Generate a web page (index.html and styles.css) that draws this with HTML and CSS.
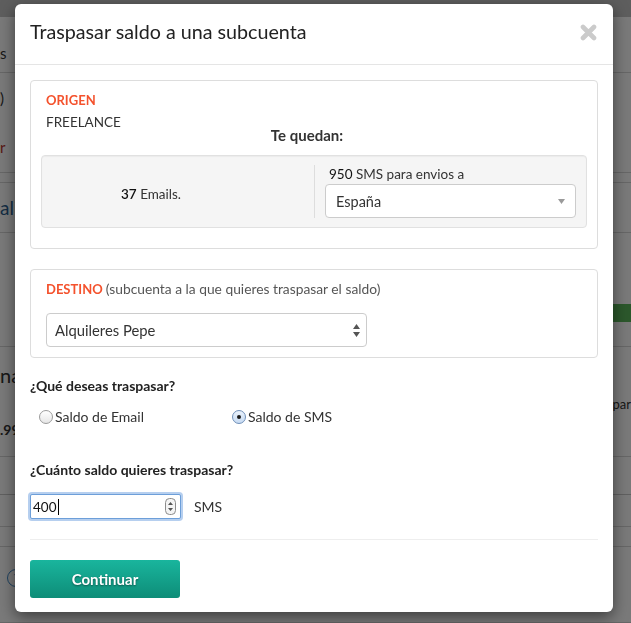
FILE: index.html
```html
<!DOCTYPE html>
<html lang="es">
<head>
<meta charset="utf-8">
<title>Traspasar saldo a una subcuenta</title>
<link rel="stylesheet" href="styles.css">
</head>
<body>
<div class="page">
  <div class="page-top"></div>
  <div class="page-row row-a"><span class="frag">s</span></div>
  <div class="page-row row-b">
    <span class="frag">)</span>
    <span class="frag red">r</span>
  </div>
  <div class="page-row row-c"></div>
  <div class="page-row row-d"><span class="frag blue">aliz</span></div>
  <div class="page-row row-e"><div class="green-bar"></div></div>
  <div class="page-row row-f">
    <span class="frag big">na</span>
    <span class="frag right">par</span>
    <span class="frag bold">.99</span>
  </div>
  <div class="page-row row-g"></div>
  <div class="page-row row-h"></div>
  <div class="page-row row-j"></div>
  <div class="page-row row-i"><span class="help-circle">?</span></div>
</div>

<div class="backdrop"></div>

<div class="modal">
  <div class="modal-header">
    <h4 class="modal-title">Traspasar saldo a una subcuenta</h4>
    <svg class="close-icon" width="17" height="17" viewBox="0 0 17 17" aria-label="Cerrar">
      <path d="M3 3 L14 14 M14 3 L3 14" stroke="#cbcbcb" stroke-width="4.6" stroke-linecap="round"/>
    </svg>
  </div>

  <div class="modal-body">
    <div class="panel">
      <div class="panel-label">ORIGEN</div>
      <div class="account-name">FREELANCE</div>
      <div class="remaining">Te quedan:</div>
      <div class="well">
        <div class="well-col emails"><span><b class="num">37</b> Emails.</span></div>
        <div class="well-col sms">
          <div class="sms-label"><span class="num">950</span> SMS para envios a</div>
          <div class="select">
            <span>España</span>
            <svg width="7" height="5" viewBox="0 0 7 5"><path d="M0 0 H7 L3.5 5 Z" fill="#9a9a9a"/></svg>
          </div>
        </div>
      </div>
    </div>

    <div class="panel panel-dest">
      <div class="panel-label">DESTINO <span class="hint">(subcuenta a la que quieres traspasar el saldo)</span></div>
      <div class="select select-dest">
        <span>Alquileres Pepe</span>
        <svg width="7" height="13" viewBox="0 0 7 13"><path d="M0 5 H7 L3.5 0 Z M0 8 H7 L3.5 13 Z" fill="#555"/></svg>
      </div>
    </div>

    <div class="question q1">¿Qué deseas traspasar?</div>
    <div class="radios">
      <label class="radio"><span class="radio-dot"></span>Saldo de Email</label>
      <label class="radio"><span class="radio-dot checked"></span>Saldo de SMS</label>
    </div>

    <div class="question q2">¿Cuánto saldo quieres traspasar?</div>
    <div class="amount-row">
      <div class="amount-input">
        <span class="amount-value">400</span><span class="caret"></span>
        <svg class="spinner" width="11" height="17" viewBox="0 0 11 17">
          <rect x="0.5" y="0.5" width="10" height="16" rx="4" fill="#f4f4f4" stroke="#8c8c8c"/>
          <path d="M3 7 H8 L5.5 4 Z M3 10 H8 L5.5 13 Z" fill="#555"/>
        </svg>
      </div>
      <span class="unit">SMS</span>
    </div>

    <hr class="divider">

    <button class="btn-continue" type="button">Continuar</button>
  </div>
</div>
</body>
</html>
```

FILE: styles.css
```css
* { box-sizing: border-box; }

html, body {
  margin: 0;
  padding: 0;
}

body {
  width: 631px;
  height: 623px;
  overflow: hidden;
  position: relative;
  font-family: Lato, "Open Sans", "Liberation Sans", sans-serif;
  font-size: 13.5px;
  color: #333;
  background: #fff;
}

/* ---------- background page ---------- */
.page {
  display: flex;
  flex-direction: column;
}

.page-top {
  height: 17px;
  background: #c4c4c4;
}

.page-row {
  position: relative;
  display: flex;
  flex-direction: column;
  justify-content: center;
  border-bottom: 1px solid #d8d8d8;
}

.row-a { height: 56px; justify-content: flex-end; padding-bottom: 10px; }
.row-b { height: 100px; justify-content: space-around; }
.row-c { height: 10px; }
.row-d { height: 50px; }
.row-e { height: 114px; justify-content: flex-start; padding-top: 71px; }
.row-f { height: 110px; justify-content: flex-start; padding-top: 19px; }
.row-g { height: 38px; border-bottom-color: #c8c8c8; }
.row-h { height: 32px; }
.row-j { height: 20px; }
.row-i { height: 76px; padding-left: 7px; padding-bottom: 14px; }

.frag {
  line-height: 18px;
  font-size: 15px;
  color: #333;
}
.frag.red { color: #b8342a; }
.frag.blue { color: #2c5f8f; font-size: 19px; }
.frag.big { font-size: 20px; }
.frag.right { align-self: flex-end; font-size: 13px; margin-top: 11px; margin-right: 0; }
.frag.bold { font-weight: 700; font-size: 14px; margin-top: 8px; }

.green-bar {
  align-self: flex-end;
  width: 40px;
  height: 18px;
  background: #5cb85c;
}

.help-circle {
  width: 18px;
  height: 18px;
  border: 1px solid #428bca;
  border-radius: 50%;
  color: #428bca;
  font-size: 12px;
  display: flex;
  align-items: center;
  justify-content: center;
}

/* ---------- overlay ---------- */
.backdrop {
  position: fixed;
  inset: 0;
  background: rgba(0, 0, 0, 0.52);
}

.modal {
  position: absolute;
  left: 15px;
  top: 4px;
  width: 598px;
  height: 608px;
  background: #fff;
  border-radius: 6px;
  box-shadow: 0 5px 15px rgba(0, 0, 0, 0.5);
  display: flex;
  flex-direction: column;
}

.modal-header {
  display: flex;
  align-items: center;
  justify-content: space-between;
  padding: 15px 16px 19px 15px;
  border-bottom: 1px solid #e5e5e5;
}

.modal-title {
  margin: 0;
  font-size: 19.7px;
  line-height: 26px;
  font-weight: 400;
  color: #222;
}

.close-icon { display: block; margin-top: 0; }

.modal-body {
  padding: 15px 15px 0;
}

/* ---------- panels ---------- */
.panel {
  border: 1px solid #dddddd;
  border-radius: 4px;
  padding: 10px 10px 20px;
}

.panel-dest {
  margin-top: 20px;
  padding: 10px 10px 10px 15px;
}

.panel-label {
  padding-left: 5px;
  line-height: 18px;
  font-size: 13px;
  font-weight: 700;
  color: #f4522d;
}

.panel-dest .panel-label { padding-left: 0; }

.hint {
  font-weight: 400;
  font-size: 13.8px;
  color: #555;
}

.account-name {
  padding-left: 5px;
  margin-top: 7px;
  line-height: 13px;
}

.remaining {
  text-align: center;
  padding-right: 14px;
  line-height: 13px;
  font-size: 15px;
  font-weight: 700;
}

.well {
  margin-top: 13px;
  display: grid;
  grid-template-columns: 272px 1fr;
  background: #f5f5f5;
  border: 1px solid #e1e1e1;
  border-radius: 4px;
  padding: 9px 10px 9px 0;
  box-shadow: inset 0 1px 1px rgba(0, 0, 0, 0.04);
}

.well-col.emails {
  display: flex;
  align-items: center;
  padding-left: 79px;
  padding-top: 4px;
}

.num { font-weight: 400; color: #111; }
.emails .num { font-weight: 600; }

.well-col.sms {
  border-left: 1px solid #dddddd;
  padding-left: 10px;
}

.sms-label {
  line-height: 18px;
  padding-left: 4px;
}

.select {
  margin-top: 1px;
  height: 34px;
  border: 1px solid #cccccc;
  border-radius: 4px;
  background: #fff;
  display: flex;
  align-items: center;
  justify-content: space-between;
  padding: 0 10px 0 10px;
  font-size: 14.5px;
  color: #333;
}

.select svg { display: block; }

.select-dest {
  margin-top: 15px;
  width: 321px;
  padding: 0 6px 0 8px;
  font-size: 14.8px;
}

/* ---------- questions ---------- */
.question {
  font-weight: 700;
  font-size: 14px;
  line-height: 18px;
  color: #222;
}

.q1 { margin-top: 19px; }
.q2 { margin-top: 35px; }

.radios {
  margin-top: 13px;
  display: grid;
  grid-template-columns: 193px 1fr;
  line-height: 18px;
}

.radio {
  display: flex;
  align-items: center;
  padding-left: 9px;
  font-size: 14px;
}

.radio-dot {
  width: 14px;
  height: 14px;
  border-radius: 50%;
  border: 1px solid #9b9b9b;
  background: linear-gradient(#ffffff, #e6e6e6);
  margin-right: 2px;
  display: flex;
  align-items: center;
  justify-content: center;
}

.radio-dot.checked {
  border-color: #6f8fb8;
  background: linear-gradient(#eaf2fc, #c7dbf3);
}

.radio-dot.checked::after {
  content: "";
  width: 4px;
  height: 4px;
  border-radius: 50%;
  background: #1a1a1a;
}

/* ---------- amount ---------- */
.amount-row {
  margin-top: 15px;
  display: flex;
  align-items: center;
  gap: 13px;
}

.amount-input {
  width: 151px;
  height: 25px;
  border: 1px solid #6d9fd9;
  box-shadow: 0 0 0 2px rgba(122, 168, 226, 0.55);
  border-radius: 2px;
  display: flex;
  align-items: center;
  padding: 0 4px 0 2px;
  font-size: 13.5px;
  color: #111;
  background: #fff;
}

.caret {
  width: 1px;
  height: 16px;
  background: #000;
  margin-left: 1px;
}

.spinner { margin-left: auto; display: block; }

.unit { font-size: 14px; }

.divider {
  margin: 20px 0 0;
  border: 0;
  border-top: 1px solid #eeeeee;
}

.btn-continue {
  margin-top: 20px;
  width: 150px;
  height: 38px;
  border: 0;
  border-radius: 3px;
  background: linear-gradient(#19b59d, #0e8d78);
  color: #fff;
  font-family: inherit;
  font-size: 15px;
  font-weight: 700;
  text-shadow: 0 1px 2px rgba(0, 0, 0, 0.45);
  cursor: pointer;
}
```
